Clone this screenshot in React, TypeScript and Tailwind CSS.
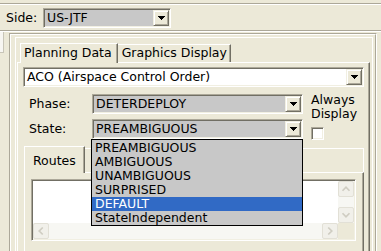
import React from "react";

const sunken =
  "border-t border-l border-t-[#aca899] border-l-[#aca899] border-b border-r border-b-white border-r-white shadow-[inset_1px_1px_0_#716f64,inset_-1px_-1px_0_#f1efe2]";
const raised =
  "border-t border-l border-t-[#f1efe2] border-l-[#f1efe2] border-b border-r border-b-[#716f64] border-r-[#716f64] shadow-[inset_1px_1px_0_#ffffff,inset_-1px_-1px_0_#aca899]";

function DownArrow() {
  return (
    <svg width="7" height="4" viewBox="0 0 7 4" shapeRendering="crispEdges">
      <rect x="0" y="0" width="7" height="1" fill="#000" />
      <rect x="1" y="1" width="5" height="1" fill="#000" />
      <rect x="2" y="2" width="3" height="1" fill="#000" />
      <rect x="3" y="3" width="1" height="1" fill="#000" />
    </svg>
  );
}

function Combo({ value, width, white }: { value: string; width: string; white?: boolean }) {
  return (
    <div className={`${width} h-[20px] p-[1px] flex items-stretch ${white ? "bg-white" : "bg-[#c8c8c8]"} ${sunken}`}>
      <div className="flex-1 flex items-center pl-[2px] leading-none whitespace-nowrap overflow-hidden">{value}</div>
      <div className={`w-[16px] bg-[#ece9d8] flex items-center justify-center ${raised}`}>
        <DownArrow />
      </div>
    </div>
  );
}

function ScrollBtn({ dir }: { dir: "up" | "down" | "left" | "right" }) {
  const pts = {
    up: "4,10 8,6 12,10",
    down: "4,6 8,10 12,6",
    left: "10,4 6,8 10,12",
    right: "6,4 10,8 6,12",
  }[dir];
  return (
    <div className="w-[16px] h-[16px] bg-[#f1f0ea] border border-[#e2e0d6] rounded-[2px] flex items-center justify-center">
      <svg width="16" height="16" viewBox="0 0 16 16">
        <polyline points={pts} fill="none" stroke="#cfcdc2" strokeWidth="2" />
      </svg>
    </div>
  );
}

const states = ["PREAMBIGUOUS", "AMBIGUOUS", "UNAMBIGUOUS", "SURPRISED", "DEFAULT", "StateIndependent"];

export default function App() {
  return (
    <div className="relative w-[381px] h-[251px] overflow-hidden bg-[#ece9d8] text-[12.5px] text-black font-['DejaVu_Sans',sans-serif]">
      {/* top toolbar */}
      <div className="mt-[3px] border-t border-[#aca899]">
        <div className="border-t border-white flex items-center pt-[3px] pb-[2px] pl-[6px] border-b border-b-[#aca899]">
          <span className="w-[37px]">Side:</span>
          <Combo value="US-JTF" width="w-[128px]" />
        </div>
      </div>
      <div className="border-t border-white flex">
        {/* left strip */}
        <div className="w-[9px] shrink-0">
          <div className="w-[4px] h-[21px] bg-[#f7f6f2] border-r border-b border-[#c8c5b8]" />
        </div>
        {/* outer panel */}
        <div className="mt-[1px] w-[368px] h-[240px] border-t border-l border-[#aca899] border-r border-b border-r-white border-b-white">
          <div className="h-full border-t border-l border-white border-r border-b border-r-[#aca899] border-b-[#aca899] pl-[4px] pr-[2px] pt-[2px]">
            {/* tab control */}
            <div className="h-[260px] border-t border-l border-r border-white">
              {/* tab strip */}
              <div className="h-[24px] flex items-end pl-[4px]">
                <div className="relative z-10 h-[20px] -mb-[1px] bg-[#ece9d8] border-t border-l border-white border-r border-r-[#716f64] shadow-[inset_-1px_0_0_#aca899] pl-[3px] pr-[5px] leading-[17px]">
                  Planning Data
                </div>
                <div className="h-[18px] border-t border-white border-r border-r-[#716f64] shadow-[inset_-1px_0_0_#aca899] pl-[4px] pr-[3px] leading-[16px]">
                  Graphics Display
                </div>
              </div>
              {/* tab page */}
              <div className="ml-[1px] mr-[2px] h-[240px] border-t border-l border-white border-r border-r-[#716f64] shadow-[inset_-1px_0_0_#aca899] pl-[5px] pt-[4px]">
                <Combo value="ACO (Airspace Control Order)" width="w-[341px]" white />
                <div className="flex mt-[7px]">
                  <div className="flex flex-col gap-[5px] w-[280px]">
                    <div className="flex items-center">
                      <span className="w-[69px] pl-[6px]">Phase:</span>
                      <Combo value="DETERDEPLOY" width="w-[211px]" />
                    </div>
                    <div className="flex items-center">
                      <span className="w-[69px] pl-[6px]">State:</span>
                      <Combo value="PREAMBIGUOUS" width="w-[211px]" />
                    </div>
                  </div>
                  <div className="ml-[8px] -mt-[1px] leading-[14px]">
                    <div>Always</div>
                    <div>Display</div>
                    <div className={`mt-[6px] w-[13px] h-[13px] bg-white ${sunken}`} />
                  </div>
                </div>
                {/* inner tab control */}
                <div className="mt-[6px] ml-[1px] w-[340px] flex flex-col">
                  <div className="h-[26px] flex items-stretch">
                    <div className="relative z-10 -mb-[1px] w-[61px] bg-[#ece9d8] border-t border-l border-white border-r border-r-[#716f64] shadow-[inset_-1px_0_0_#aca899] pl-[8px] pt-[5px]">
                      Routes
                    </div>
                    <div className="flex-1 mt-[2px] border-t border-r border-white" />
                  </div>
                  <div className="h-[80px] border-t border-l border-white border-r border-r-[#716f64] shadow-[inset_-1px_0_0_#aca899] pl-[6px] pt-[6px]">
                    <div className={`w-[325px] h-[62px] bg-white p-[1px] flex flex-col ${sunken}`}>
                      <div className="flex flex-1">
                        <div className="flex-1" />
                        <div className="w-[16px] flex flex-col bg-[#f7f7f3]">
                          <ScrollBtn dir="up" />
                          <div className="flex-1" />
                          <ScrollBtn dir="down" />
                        </div>
                      </div>
                      <div className="flex h-[16px]">
                        <div className="flex-1 flex bg-[#f7f7f3]">
                          <ScrollBtn dir="left" />
                          <div className="flex-1" />
                          <ScrollBtn dir="right" />
                        </div>
                        <div className="w-[16px] bg-[#ece9d8]" />
                      </div>
                    </div>
                  </div>
                </div>
              </div>
            </div>
          </div>
        </div>
      </div>

      {/* open dropdown list */}
      <div className="absolute left-[91px] top-[139px] w-[212px] h-[87px] border border-black bg-[#c8c8c8] pt-[1px]">
        {states.map((s) => (
          <div
            key={s}
            className={`h-[14px] pl-[3px] leading-[14px] whitespace-nowrap ${s === "DEFAULT" ? "bg-[#316ac5] text-white" : ""}`}
          >
            {s}
          </div>
        ))}
      </div>
    </div>
  );
}
